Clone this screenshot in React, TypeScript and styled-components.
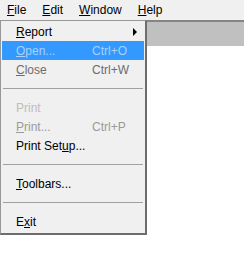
import React from "react";
import styled, { createGlobalStyle } from "styled-components";

const GlobalStyle = createGlobalStyle`
  html, body {
    margin: 0;
    padding: 0;
    background: #ffffff;
  }
  body {
    font-family: "Liberation Sans", Arial, sans-serif;
    font-size: 12px;
    color: #000000;
  }
`;

const Window = styled.div`
  position: relative;
  width: 244px;
  height: 256px;
  background: #ffffff;
  overflow: hidden;
`;

const MenuBar = styled.div`
  display: flex;
  align-items: center;
  height: 20px;
  background: #f0f0f0;
`;

const BarItem = styled.div`
  padding: 0 8px 0 7px;
  line-height: 20px;
  margin-right: 1px;
`;

const ToolStrip = styled.div`
  height: 24px;
  margin-left: 146px;
  background: #c0c0c0;
  border-top: 2px solid #858585;
  border-left: 1px solid #858585;
`;

const Dropdown = styled.div`
  position: absolute;
  top: 20px;
  left: 0;
  width: 147px;
  box-sizing: border-box;
  padding: 1px 1px 2px 1px;
  background: #f0f0f0;
  border: 1px solid #979797;
  border-right: 2px solid #6d6d6d;
  border-bottom: 2px solid #6d6d6d;
`;

const Item = styled.div<{ $active?: boolean; $tone?: string }>`
  display: grid;
  grid-template-columns: 76px 1fr 12px;
  align-items: center;
  height: 19px;
  padding-left: 14px;
  background: ${(p) => (p.$active ? "#3399ff" : "transparent")};
  color: ${(p) => p.$tone || "#000000"};
  white-space: nowrap;
`;

const Shortcut = styled.span``;

const Arrow = styled.span`
  width: 0;
  height: 0;
  border-top: 4px solid transparent;
  border-bottom: 4px solid transparent;
  border-left: 4px solid #000000;
  justify-self: start;
  margin-left: 1px;
`;

const Separator = styled.div`
  display: flex;
  align-items: center;
  height: 19px;
  &::before {
    content: "";
    flex: 1;
    margin: 0 1px;
    border-top: 1px solid #a0a0a0;
  }
`;

type Entry =
  | { sep: true }
  | {
      label: React.ReactNode;
      shortcut?: string;
      tone?: string;
      active?: boolean;
      sub?: boolean;
    };

const entries: Entry[] = [
  { label: <><u>R</u>eport</>, sub: true },
  { label: <><u>O</u>pen...</>, shortcut: "Ctrl+O", active: true, tone: "#a9d1fb" },
  { label: <><u>C</u>lose</>, shortcut: "Ctrl+W", tone: "#6d6d6d" },
  { sep: true },
  { label: "Print", tone: "#bdbdbd" },
  { label: <><u>P</u>rint...</>, shortcut: "Ctrl+P", tone: "#9a9a9a" },
  { label: <>Print Set<u>u</u>p...</> },
  { sep: true },
  { label: <><u>T</u>oolbars...</> },
  { sep: true },
  { label: <>E<u>x</u>it</> },
];

const App = () => {
  return (
    <Window>
      <GlobalStyle />
      <MenuBar>
        <BarItem><u>F</u>ile</BarItem>
        <BarItem><u>E</u>dit</BarItem>
        <BarItem><u>W</u>indow</BarItem>
        <BarItem><u>H</u>elp</BarItem>
      </MenuBar>
      <ToolStrip />
      <Dropdown>
        {entries.map((e, i) =>
          "sep" in e ? (
            <Separator key={i} />
          ) : (
            <Item key={i} $active={e.active} $tone={e.tone}>
              <span>{e.label}</span>
              <Shortcut>{e.shortcut}</Shortcut>
              {e.sub ? <Arrow /> : <span />}
            </Item>
          )
        )}
      </Dropdown>
    </Window>
  );
};

export default App;
